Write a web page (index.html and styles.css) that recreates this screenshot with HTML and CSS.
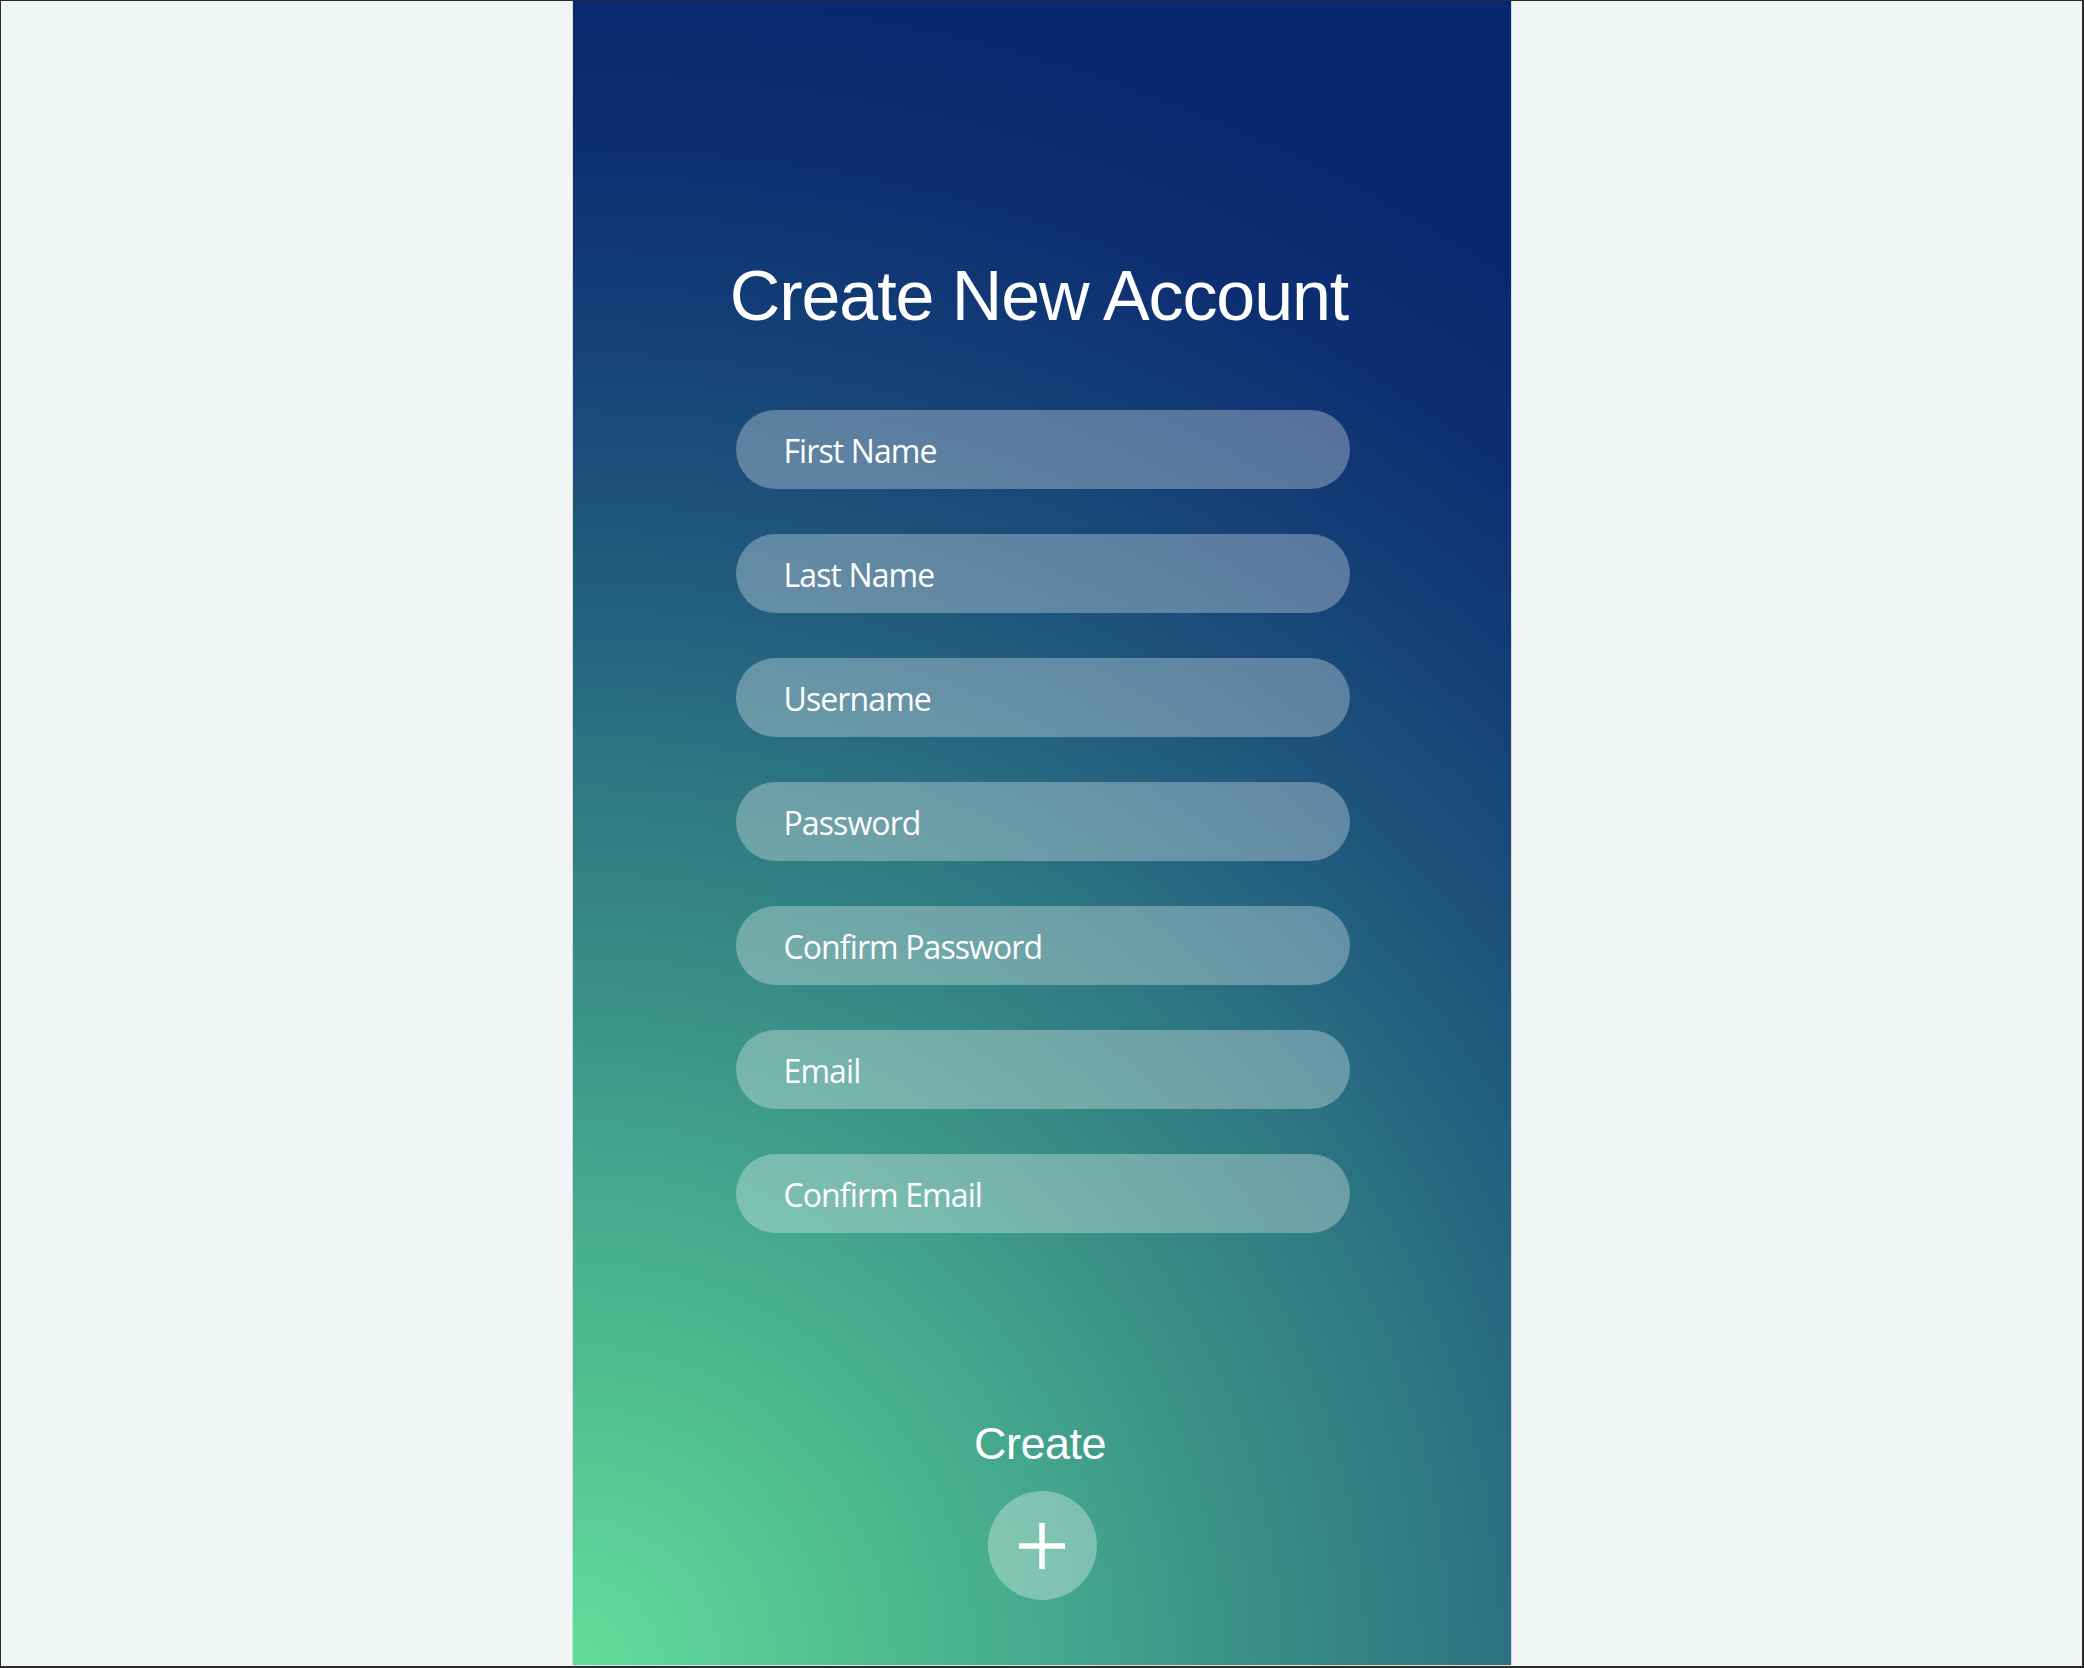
FILE: index.html
```html
<!DOCTYPE html>
<html lang="en">
<head>
<meta charset="utf-8">
<title>Create New Account</title>
<link rel="stylesheet" href="styles.css">
</head>
<body>
  <main class="panel">
    <h1 class="title">Create New Account</h1>
    <form class="form">
      <div class="field">First Name</div>
      <div class="field">Last Name</div>
      <div class="field">Username</div>
      <div class="field">Password</div>
      <div class="field">Confirm Password</div>
      <div class="field">Email</div>
      <div class="field">Confirm Email</div>
    </form>
    <div class="create-label">Create</div>
    <button class="create-btn" type="button" aria-label="Create">
      <svg width="46" height="46" viewBox="0 0 46 46">
        <line x1="0" y1="23" x2="46" y2="23" stroke="#ffffff" stroke-width="5.5"/>
        <line x1="23" y1="0" x2="23" y2="46" stroke="#ffffff" stroke-width="5.5"/>
      </svg>
    </button>
  </main>
</body>
</html>
```

FILE: styles.css
```css
html, body {
  margin: 0;
  padding: 0;
}

body {
  width: 2084px;
  height: 1668px;
  box-sizing: border-box;
  background: #f1f5f5;
  border-style: solid;
  border-color: #2b2b2b;
  border-width: 1px 2px 2px 1px;
  display: flex;
  justify-content: center;
  overflow: hidden;
}

.panel {
  width: 938px;
  height: 1664px;
  margin-left: 1px;
  box-sizing: border-box;
  padding-top: 260px;
  display: flex;
  flex-direction: column;
  align-items: center;
  background: radial-gradient(circle at 0% 100%,
      #63dd99 0px,
      #52c192 260px,
      #45a88c 480px,
      #3a9287 660px,
      #2e7882 880px,
      #256480 1030px,
      #1b4f7a 1200px,
      #133e76 1360px,
      #0d2f72 1520px,
      #0a2870 1680px);
  box-shadow: 1px 0 0 #d5dadc, -1px 0 0 #d5dadc, 0 1px 0 #dde2e3;
}

.title {
  margin: 0;
  font-family: "Liberation Sans", Arial, sans-serif;
  font-weight: 400;
  font-size: 70px;
  line-height: 70px;
  letter-spacing: -1.1px;
  color: #ffffff;
  margin-left: -6px;
}

.form {
  margin: 79px 0 0;
  display: flex;
  flex-direction: column;
  gap: 45px;
}

.field {
  width: 614px;
  height: 79px;
  box-sizing: border-box;
  padding-left: 48px;
  padding-top: 2px;
  border-radius: 40px;
  background: rgba(255, 255, 255, 0.3);
  display: flex;
  align-items: center;
  font-family: "Open Sans", "Noto Sans", sans-serif;
  font-size: 32px;
  letter-spacing: -0.9px;
  color: #ffffff;
  margin-left: 1px;
}

.create-label {
  margin-top: 188px;
  font-family: "Liberation Sans", Arial, sans-serif;
  font-size: 45px;
  line-height: 45px;
  letter-spacing: -0.5px;
  color: #ffffff;
  margin-left: -4px;
}

.create-btn {
  margin-top: 25px;
  width: 109px;
  height: 109px;
  border: none;
  padding: 0;
  border-radius: 50%;
  background: rgba(255, 255, 255, 0.32);
  display: flex;
  align-items: center;
  justify-content: center;
  cursor: pointer;
}

.create-btn svg {
  display: block;
}
```
